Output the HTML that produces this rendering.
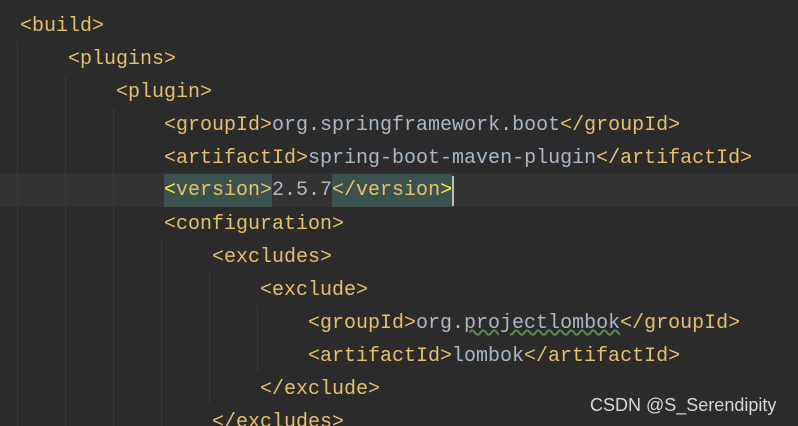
<!DOCTYPE html><html><head><style>
html,body{margin:0;width:798px;height:426px;overflow:hidden}
body{background:#2b2b2b;position:relative;font-family:"Liberation Mono",monospace;font-size:20px}
.l{position:absolute;left:0;height:33px;line-height:33px;white-space:pre;color:#e8bf6a}
.v{color:#a9b7c6}
.g{position:absolute;width:1px;background:#3a3a3a}
.cur{position:absolute;left:0;right:0;top:173px;height:34px;background:#323232}
.h{background:#3b514d;display:inline-block;height:33px;vertical-align:top}
.y{color:#ffef28}
</style></head><body>
<div class="cur"></div>
<div class="g" style="left:17px;top:42px;height:384px"></div>
<div class="g" style="left:65px;top:75px;height:351px"></div>
<div class="g" style="left:113px;top:108px;height:318px"></div>
<div class="g" style="left:161px;top:240px;height:186px"></div>
<div class="g" style="left:209px;top:273px;height:130px"></div>
<div class="g" style="left:257px;top:306px;height:66px"></div>
<div class="l" style="top:10px;left:20px">&lt;build&gt;</div>
<div class="l" style="top:43px;left:68px">&lt;plugins&gt;</div>
<div class="l" style="top:76px;left:116px">&lt;plugin&gt;</div>
<div class="l" style="top:109px;left:164px">&lt;groupId&gt;<span class="v">org.springframework.boot</span>&lt;/groupId&gt;</div>
<div class="l" style="top:142px;left:164px">&lt;artifactId&gt;<span class="v">spring-boot-maven-plugin</span>&lt;/artifactId&gt;</div>
<div class="l" style="top:174px;left:164px"><span class="h"><span class="y">&lt;</span>version&gt;</span><span class="v">2.5.7</span><span class="h">&lt;/version<span class="y">&gt;</span></span><span style="display:inline-block;width:2px;height:30px;background:#bbb;vertical-align:top;margin-top:2px"></span></div>
<div class="l" style="top:208px;left:164px">&lt;configuration&gt;</div>
<div class="l" style="top:241px;left:212px">&lt;excludes&gt;</div>
<div class="l" style="top:274px;left:260px">&lt;exclude&gt;</div>
<div class="l" style="top:307px;left:308px">&lt;groupId&gt;<span class="v">org.<span style="text-decoration:underline wavy #5a8a4a">projectlombok</span></span>&lt;/groupId&gt;</div>
<div class="l" style="top:340px;left:308px">&lt;artifactId&gt;<span class="v">lombok</span>&lt;/artifactId&gt;</div>
<div class="l" style="top:373px;left:260px">&lt;/exclude&gt;</div>
<div class="l" style="top:406px;left:212px">&lt;/excludes&gt;</div>
<div style="position:absolute;left:590px;top:395px;font-family:'Liberation Sans',sans-serif;font-size:18px;color:#d8d8d8">CSDN @S_Serendipity</div>
</body></html>
